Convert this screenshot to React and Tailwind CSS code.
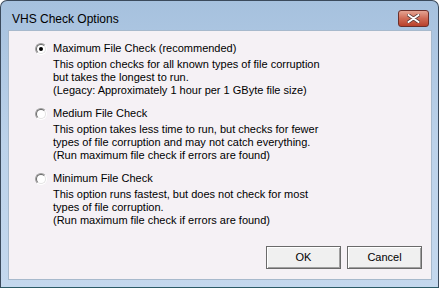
import React from 'react'

const options = [
  {
    label: 'Maximum File Check (recommended)',
    checked: true,
    lines: [
      'This option checks for all known types of file corruption',
      'but takes the longest to run.',
      '(Legacy: Approximately 1 hour per 1 GByte file size)',
    ],
  },
  {
    label: 'Medium File Check',
    lines: [
      'This option takes less time to run, but checks for fewer',
      'types of file corruption and may not catch everything.',
      '(Run maximum file check if errors are found)',
    ],
  },
  {
    label: 'Minimum File Check',
    lines: [
      'This option runs fastest, but does not check for most',
      'types of file corruption.',
      '(Run maximum file check if errors are found)',
    ],
  },
]

// classic sunken radio: two rings with lit/shaded sides
const Radio = ({ checked }) => (
  <div className="w-[12px] h-[12px] shrink-0 rounded-full border border-t-[#a0a0a0] border-l-[#a0a0a0] border-b-[#ffffff] border-r-[#ffffff]">
    <div className="w-full h-full rounded-full border border-t-[#696969] border-l-[#696969] border-b-[#e3e3e3] border-r-[#e3e3e3] bg-white flex items-center justify-center">
      {checked && <div className="w-[4px] h-[4px] rounded-full bg-black" />}
    </div>
  </div>
)

const Button = ({ children }) => (
  <button className="w-[75px] h-[23px] bg-[#f0f0f0] border border-[#6a6a6a] shadow-[inset_1px_1px_0_#ffffff,inset_-1px_-1px_0_#a0a0a0] text-[11px] text-black">
    {children}
  </button>
)

export default function App() {
  return (
    <div
      className="w-[439px] h-[288px] rounded-t-[7px] border border-[#3b4a5c] border-b-[#2b5a66] bg-gradient-to-b from-[#a6c1de] via-[#bcd2ea] to-[#c4d8ee] pl-[7px] pr-[6px] pt-[29px] pb-[7px] relative"
      style={{ fontFamily: '"Liberation Sans", Arial, sans-serif' }}
    >
      {/* Title */}
      <div className="absolute left-[11px] top-[9px] text-[12px] text-black">VHS Check Options</div>
      <button className="absolute right-[9px] top-[9px] w-[31px] h-[17px] rounded-[3px] border border-[#6b2f2a] bg-gradient-to-b from-[#e4a493] via-[#cf6a55] to-[#b8402b] flex items-center justify-center">
        <svg width="13" height="9" viewBox="0 0 13 9">
          <path d="M1.5 1 L11.5 8 M11.5 1 L1.5 8" stroke="#5a3a38" strokeWidth="3.4" strokeLinecap="round" />
          <path d="M1.5 1 L11.5 8 M11.5 1 L1.5 8" stroke="#ffffff" strokeWidth="2" strokeLinecap="round" />
        </svg>
      </button>

      {/* Client area */}
      <div className="h-full bg-[#f5f1f5] border border-[#a7b9cc] flex flex-col pt-[11px] pl-[26px] pr-[9px] pb-[10px] text-[11px] leading-[13px] text-black">
        <div className="flex flex-col gap-[10px]">
          {options.map((o) => (
            <div key={o.label} className="flex flex-col">
              <div className="flex items-center gap-[6px] h-[13px]">
                <Radio checked={o.checked} />
                <span>{o.label}</span>
              </div>
              <div className="pl-[18px] pt-[3px]">
                {o.lines.map((l) => (
                  <div key={l}>{l}</div>
                ))}
              </div>
            </div>
          ))}
        </div>
        <div className="mt-auto flex justify-end gap-[6px]">
          <Button>OK</Button>
          <Button>Cancel</Button>
        </div>
      </div>
    </div>
  )
}
